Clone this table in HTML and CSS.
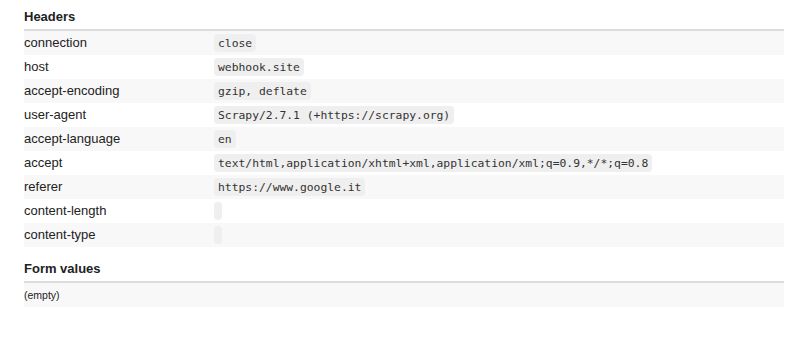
FILE: index.html
```html
<!DOCTYPE html>
<html lang="en">
<head>
  <meta charset="UTF-8">
  <title>Request details</title>
  <link rel="stylesheet" href="styles.css">
</head>
<body>
  <div class="request-details">
    <!-- Headers -->
    <table class="detail-table">
      <thead>
        <tr><th colspan="2">Headers</th></tr>
      </thead>
      <tbody>
        <tr><td class="key">connection</td><td><code>close</code></td></tr>
        <tr><td class="key">host</td><td><code>webhook.site</code></td></tr>
        <tr><td class="key">accept-encoding</td><td><code>gzip, deflate</code></td></tr>
        <tr><td class="key">user-agent</td><td><code>Scrapy/2.7.1 (+https://scrapy.org)</code></td></tr>
        <tr><td class="key">accept-language</td><td><code>en</code></td></tr>
        <tr><td class="key">accept</td><td><code>text/html,application/xhtml+xml,application/xml;q=0.9,*/*;q=0.8</code></td></tr>
        <tr><td class="key">referer</td><td><code>https://www.google.it</code></td></tr>
        <tr><td class="key">content-length</td><td><code></code></td></tr>
        <tr><td class="key">content-type</td><td><code></code></td></tr>
      </tbody>
    </table>

    <!-- Form values -->
    <table class="detail-table">
      <thead>
        <tr><th colspan="2">Form values</th></tr>
      </thead>
      <tbody>
        <tr><td colspan="2" class="empty">(empty)</td></tr>
      </tbody>
    </table>
  </div>
</body>
</html>
```

FILE: styles.css
```css
* {
  box-sizing: border-box;
}

body {
  margin: 0;
  font-family: "Liberation Sans", Arial, Helvetica, sans-serif;
  font-size: 13px;
  color: #222;
  background-color: white;
}

.request-details {
  padding: 5px 8px 0 24px;
}

.detail-table {
  width: 100%;
  border-collapse: collapse;
  border-spacing: 0;
  margin-bottom: 10px;
}

.detail-table th {
  text-align: left;
  font-weight: bold;
  height: 24px;
  line-height: 24px;
  padding: 0;
  border-bottom: 2px solid #dcdcdc;
}

.detail-table td {
  height: 24px;
  line-height: 24px;
  padding: 0;
  vertical-align: middle;
}

.detail-table tbody tr:nth-child(odd) {
  background-color: #f8f8f8;
}

.detail-table td.key {
  width: 190px;
}

.detail-table code {
  font-family: "DejaVu Sans Mono", Menlo, monospace;
  font-size: 11.35px;
  line-height: 13px;
  color: #333;
  background-color: #efefef;
  border-radius: 4px;
  padding: 2px 4px;
}

.detail-table td.empty {
  font-size: 10.5px;
}
```
